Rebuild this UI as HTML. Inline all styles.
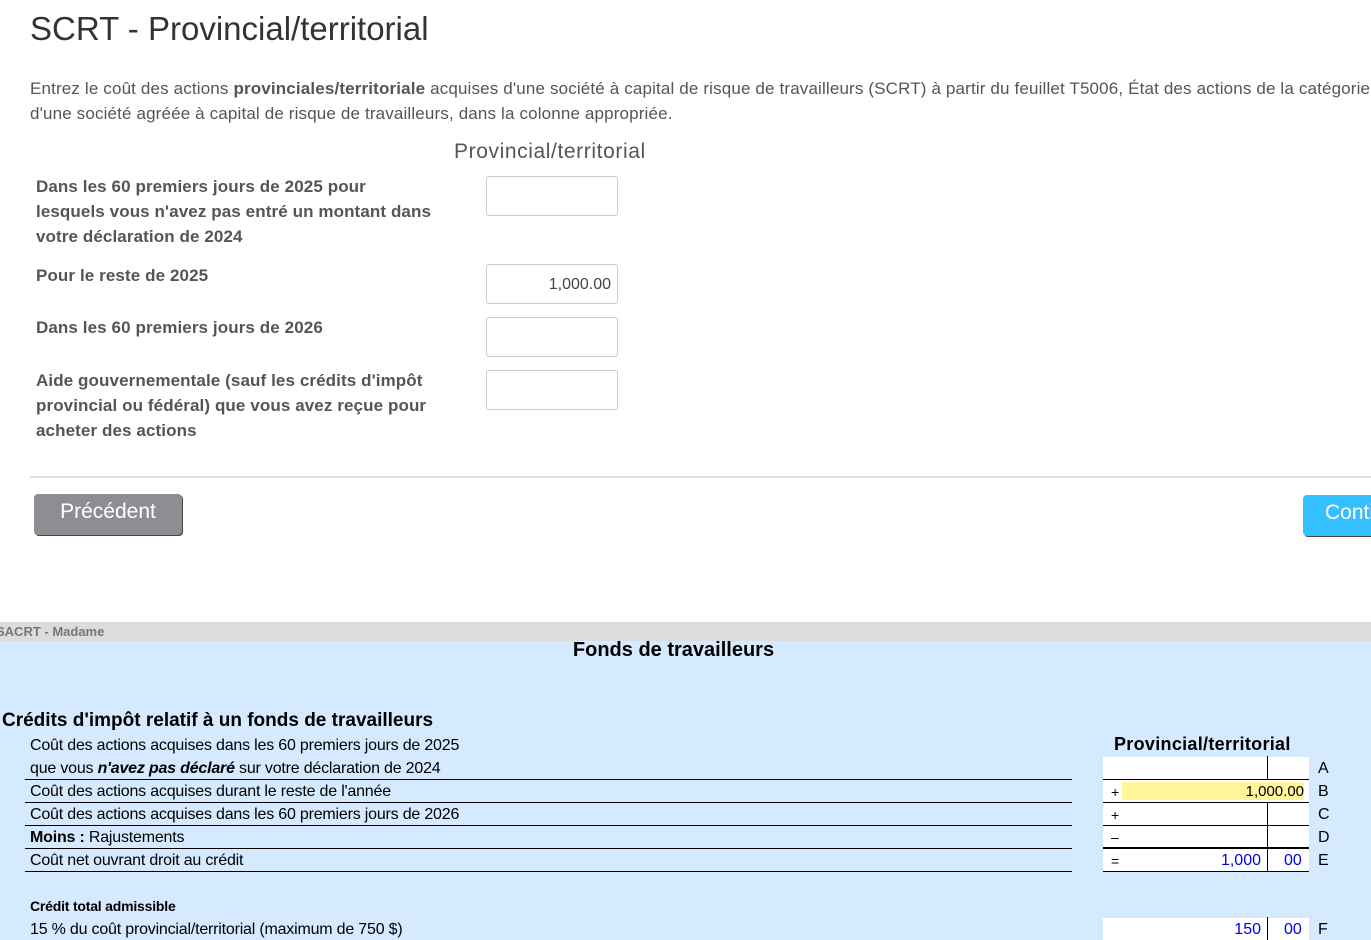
<!DOCTYPE html>
<html><head><meta charset="utf-8"><style>
*{margin:0;padding:0;box-sizing:border-box}
body{width:1371px;height:940px;overflow:hidden;background:#fff;position:relative;font-family:"Liberation Sans",Arial,sans-serif}
.a{position:absolute;white-space:nowrap}
.top{color:#555}
.lbl{position:absolute;left:36px;font-size:17px;line-height:25px;color:#555;font-weight:bold;letter-spacing:0.1px}
.inp{position:absolute;left:486px;width:132px;height:40px;border:1px solid #ccc;border-radius:3px;background:#fff;font-size:16px;color:#444;text-align:right;padding-right:6px;line-height:40px}
.r{position:absolute;left:30px;font-size:16px;color:#000;letter-spacing:-0.2px}
.hl{position:absolute;left:25px;width:1047px;height:1px;background:#000}
.cell{position:absolute;left:1103px;width:206px;height:22px;background:#fff}
.vl{position:absolute;left:1267px;width:1px;background:#000}
.let{position:absolute;left:1318px;font-size:16px}
.sg{position:absolute;left:1111px;font-size:14px}
.bl{color:#0000ee;position:absolute;font-size:16px}
</style></head><body>
<div class="a top" style="left:30px;top:10px;font-size:33px;color:#333">SCRT - Provincial/territorial</div>
<div class="a top" style="left:30px;top:76px;font-size:17px;line-height:25px;color:#555;letter-spacing:0.15px">Entrez le coût des actions <b>provinciales/territoriale</b> acquises d'une société à capital de risque de travailleurs (SCRT) à partir du feuillet T5006, État des actions de la catégorie A<br>d'une société agréée à capital de risque de travailleurs, dans la colonne appropriée.</div>
<div class="a" style="left:454px;top:140px;font-size:21px;color:#555;letter-spacing:0.6px">Provincial/territorial</div>
<div class="lbl" style="top:174px">Dans les 60 premiers jours de 2025 pour<br>lesquels vous n'avez pas entré un montant dans<br>votre déclaration de 2024</div>
<div class="inp" style="top:176px"></div>
<div class="lbl" style="top:263px">Pour le reste de 2025</div>
<div class="inp" style="top:264px">1,000.00</div>
<div class="lbl" style="top:315px">Dans les 60 premiers jours de 2026</div>
<div class="inp" style="top:317px"></div>
<div class="lbl" style="top:368px">Aide gouvernementale (sauf les crédits d'impôt<br>provincial ou fédéral) que vous avez reçue pour<br>acheter des actions</div>
<div class="inp" style="top:370px"></div>
<div class="a" style="left:30px;top:476px;width:1341px;height:2px;background:#e0e0e0"></div>
<div class="a" style="left:34px;top:494px;width:148px;height:41px;background:#8c8e94;border-radius:4px;box-shadow:1px 1px 0 #444;color:#fff;font-size:21px;text-align:center;line-height:36px">Précédent</div>
<div class="a" style="left:1303px;top:495px;width:120px;height:41px;background:#36bfff;border-radius:4px;box-shadow:1px 1px 0 #444;color:#fff;font-size:21px;line-height:36px;padding-left:22px">Continuer</div>

<div class="a" style="left:0;top:622px;width:1371px;height:19px;background:#dcdcdc;font-size:13px;font-weight:bold;color:#777;line-height:20px"><span style="margin-left:-4px">SACRT - Madame</span></div>
<div class="a" style="left:0;top:641px;width:1371px;height:299px;background:#d5eaff"></div>
<div class="a" style="left:0;width:1347px;text-align:center;top:639px;font-size:20px;font-weight:bold">Fonds de travailleurs</div>
<div class="a" style="left:2px;top:710px;font-size:19px;font-weight:bold">Crédits d'impôt relatif à un fonds de travailleurs</div>
<div class="r" style="top:737px">Coût des actions acquises dans les 60 premiers jours de 2025</div>
<div class="r" style="top:760px">que vous <b><i>n'avez pas déclaré</i></b> sur votre déclaration de 2024</div>
<div class="hl" style="top:779px"></div>
<div class="r" style="top:783px">Coût des actions acquises durant le reste de l'année</div>
<div class="hl" style="top:802px"></div>
<div class="r" style="top:806px">Coût des actions acquises dans les 60 premiers jours de 2026</div>
<div class="hl" style="top:825px"></div>
<div class="r" style="top:829px"><b>Moins :</b> Rajustements</div>
<div class="hl" style="top:848px"></div>
<div class="r" style="top:852px">Coût net ouvrant droit au crédit</div>
<div class="hl" style="top:871px"></div>
<div class="r" style="top:898px;font-size:14px;font-weight:bold">Crédit total admissible</div>
<div class="r" style="top:921px">15 % du coût provincial/territorial (maximum de 750 $)</div>

<div class="a" style="left:1114px;top:734px;font-size:18px;font-weight:bold;letter-spacing:0.3px">Provincial/territorial</div>
<div class="cell" style="top:757px"></div>
<div class="cell" style="top:780px"></div>
<div class="cell" style="top:803px"></div>
<div class="cell" style="top:826px"></div>
<div class="cell" style="top:849px"></div>
<div class="cell" style="top:918px"></div>
<div class="vl" style="top:756px;height:23px"></div>
<div class="vl" style="top:802px;height:69px"></div>
<div class="vl" style="top:917px;height:23px"></div>
<div class="a" style="left:1103px;top:779px;width:206px;height:1px;background:#000"></div>
<div class="a" style="left:1103px;top:802px;width:206px;height:1px;background:#000"></div>
<div class="a" style="left:1103px;top:825px;width:206px;height:1px;background:#000"></div>
<div class="a" style="left:1103px;top:847px;width:206px;height:2px;background:#000"></div>
<div class="a" style="left:1103px;top:871px;width:206px;height:1px;background:#000"></div>
<div class="a" style="left:1122px;top:782px;width:182px;height:18px;background:#fff59a;font-size:15px;text-align:right;line-height:19px">1,000.00</div>
<div class="sg" style="top:784px">+</div>
<div class="sg" style="top:807px">+</div>
<div class="sg" style="top:829px">–</div>
<div class="sg" style="top:853px">=</div>
<div class="bl" style="top:852px;left:1200px;width:61px;text-align:right">1,000</div>
<div class="bl" style="top:852px;left:1284px">00</div>
<div class="bl" style="top:921px;left:1200px;width:61px;text-align:right">150</div>
<div class="bl" style="top:921px;left:1284px">00</div>
<div class="let" style="top:760px">A</div>
<div class="let" style="top:783px">B</div>
<div class="let" style="top:806px">C</div>
<div class="let" style="top:829px">D</div>
<div class="let" style="top:852px">E</div>
<div class="let" style="top:921px">F</div>
</body></html>
